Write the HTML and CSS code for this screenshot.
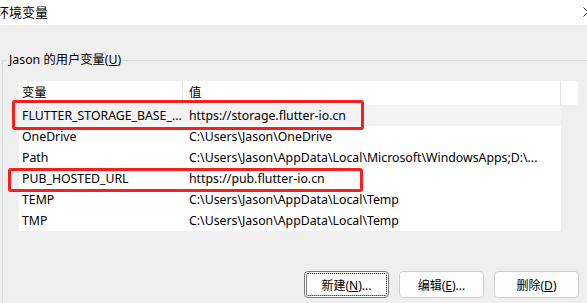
FILE: index.html
```html
<!DOCTYPE html>
<html lang="zh-CN">
<head>
<meta charset="utf-8">
<title>环境变量</title>
<link rel="stylesheet" href="styles.css">
</head>
<body>
<div class="titlebar">
  <span class="title">环境变量</span>
  <svg class="close" width="10" height="10" viewBox="0 0 10 10"><path d="M0.5 0.5 L9.5 9.5 M9.5 0.5 L0.5 9.5" stroke="#222" stroke-width="1"/></svg>
</div>
<fieldset class="group">
  <legend class="legend">Jason 的用户变量(<u>U</u>)</legend>
  <div class="list">
    <div class="head">
      <div class="hc1">变量</div>
      <div class="hc2">值</div>
      <div class="hc3"></div>
    </div>
    <div class="rows">
      <div class="row sel"><div class="c1">FLUTTER_STORAGE_BASE_...</div><div class="c2">https://storage.flutter-io.cn</div></div>
      <div class="row"><div class="c1">OneDrive</div><div class="c2">C:\Users\Jason\OneDrive</div></div>
      <div class="row"><div class="c1">Path</div><div class="c2">C:\Users\Jason\AppData\Local\Microsoft\WindowsApps;D:\...</div></div>
      <div class="row"><div class="c1">PUB_HOSTED_URL</div><div class="c2">https://pub.flutter-io.cn</div></div>
      <div class="row"><div class="c1">TEMP</div><div class="c2">C:\Users\Jason\AppData\Local\Temp</div></div>
      <div class="row"><div class="c1">TMP</div><div class="c2">C:\Users\Jason\AppData\Local\Temp</div></div>
    </div>
  </div>
  <div class="buttons">
    <button class="btn focus">新建(<u>N</u>)...</button>
    <button class="btn">编辑(<u>E</u>)...</button>
    <button class="btn">删除(<u>D</u>)</button>
  </div>
</fieldset>
<div class="mark mark1"></div>
<div class="mark mark2"></div>
</body>
</html>
```
FILE: styles.css
```css
html, body {
  margin: 0;
  padding: 0;
  width: 587px;
  height: 303px;
  overflow: hidden;
  background: #efefef;
  font-family: "Noto Sans", "Noto Sans CJK SC", sans-serif;
  font-size: 12.3px;
  color: #000;
}
body { position: relative; }

.titlebar {
  height: 25px;
  background: #fff;
  position: relative;
  overflow: hidden;
}
.title {
  display: block;
  margin-left: -4px;
  padding-top: 4px;
  font-size: 13px;
  line-height: 15px;
  font-family: "Noto Sans CJK SC", sans-serif;
  color: #000;
}
.close {
  position: absolute;
  right: -6px;
  top: 7px;
}

.group {
  margin: 28px 0 0 2px;
  padding: 0;
  border: 1px solid #d9d9d9;
  border-right: none;
  border-bottom: none;
  width: 585px;
  height: 250px;
  min-width: 0;
  box-sizing: border-box;
}
.legend {
  margin-left: 4px;
  padding: 0 2px;
  line-height: 14px;
  font-size: 12.3px;
  color: #000;
}

.list {
  margin: 14px 0 0 16px;
}
.head {
  display: flex;
  width: 559px;
  height: 24px;
  background: #fff;
  line-height: 24px;
}
.hc1 {
  width: 164px;
  box-sizing: border-box;
  padding-left: 3px;
  border-right: 1px solid #e5e5e5;
}
.hc2 {
  width: 378px;
  box-sizing: border-box;
  padding-left: 6px;
  border-right: 1px solid #e5e5e5;
}
.hc3 { flex: 1; }

.rows {
  width: 542px;
  background: #fff;
}
.row {
  display: flex;
  height: 21px;
  line-height: 21px;
  white-space: nowrap;
}
.row.sel { background: #f3f3f3; }
.c1 {
  width: 164px;
  box-sizing: border-box;
  padding-left: 3px;
  overflow: hidden;
}
.c2 {
  flex: 1;
  padding-left: 6px;
  overflow: hidden;
}

.buttons {
  display: flex;
  gap: 10px;
  margin: 40px 0 0 301px;
}
.btn {
  width: 85px;
  height: 27px;
  padding: 0;
  background: #fdfdfd;
  border: 1px solid #d0d0d0;
  border-radius: 4px;
  font-family: "Noto Sans", "Noto Sans CJK SC", sans-serif;
  font-size: 12px;
  color: #000;
}
.btn.focus {
  border-color: #7a7a7a;
  outline: 1px dotted #000;
  outline-offset: -3px;
}

.mark {
  position: absolute;
  border: 3px solid #f41f1f;
  border-radius: 3px;
  box-sizing: border-box;
}
.mark1 { left: 12px; top: 100px; width: 352px; height: 30px; }
.mark2 { left: 8px; top: 168px; width: 355px; height: 24px; }
```
